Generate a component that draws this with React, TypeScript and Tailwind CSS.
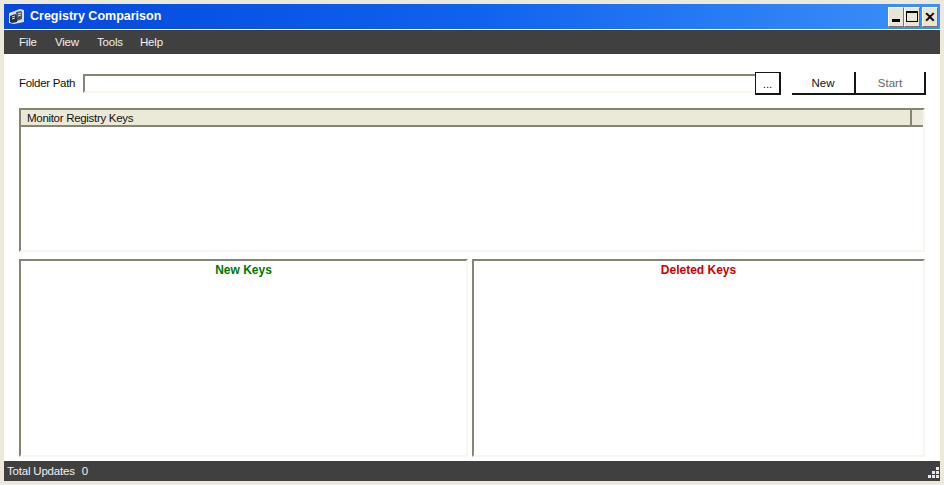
const sunken = 'border-2 border-t-[#858574] border-l-[#858574] border-r-[#f8f7ef] border-b-[#f8f7ef]'
const ui = "font-['Liberation_Sans',sans-serif]"

function AppIcon() {
  return (
    <svg width="17" height="17" viewBox="0 0 17 17">
      <path d="M1 5 L12 1 L16 2 L16 14 L6 16 L1 15 Z" fill="#d5e2f2" />
      <path d="M2 8 L7 6 L9 7 L9 14 L4 15 L2 14 Z" fill="#2c3238" />
      <path d="M8 4 L13 3 L14 4 L14 11 L9 13 Z" fill="#4c565f" />
      <path d="M4 9 L7 8 M4 11 L7 10 M10 6 L13 5 M10 8 L13 7" stroke="#dde3ea" strokeWidth="1" />
    </svg>
  )
}

function CaptionButton({ children }: { children: React.ReactNode }) {
  return (
    <div className="w-[16px] h-[20px] flex items-center justify-center bg-[#e9e6d6] border-r border-b border-r-[#77756a] border-b-[#77756a] border-t border-l border-t-white border-l-white">
      {children}
    </div>
  )
}

function FlatButton({ label, className, dim }: { label: string; className: string; dim?: boolean }) {
  return (
    <button
      className={`h-[23px] pt-[3px] bg-white border-r-2 border-b-2 border-r-[#161616] border-b-[#161616] text-[11.500px] ${
        dim ? 'text-[#666666]' : 'text-[#111111]'
      } ${className}`}
    >
      {label}
    </button>
  )
}

function KeysPanel({ title, color, className }: { title: string; color: string; className: string }) {
  return (
    <div className={`h-[198px] bg-white ${sunken} ${className}`}>
      <div className={`text-center text-[12px] leading-[14px] mt-[2px] font-bold ${color}`}>{title}</div>
    </div>
  )
}

export default function App() {
  return (
    <div className={`w-[944px] h-[485px] overflow-hidden flex flex-col bg-[#ece9d8] pt-[4px] pb-[4px] px-[4px] ${ui}`}>
      {/* title bar */}
      <div className="h-[25px] shrink-0 flex items-center pl-[4px] pr-[2px] bg-gradient-to-r from-[#0647dc] via-[#0f62ee] to-[#3c90f8]">
        <AppIcon />
        <span className="ml-[5px] text-white text-[12.500px] font-bold">Cregistry Comparison</span>
        <div className="ml-auto flex">
          <CaptionButton>
            <div className="w-[8px] h-[3px] bg-black mt-[8px]" />
          </CaptionButton>
          <CaptionButton>
            <div className="w-[12px] h-[11px] border border-black border-t-2" />
          </CaptionButton>
          <div className="w-[2px]" />
          <CaptionButton>
            <span className="text-black text-[14px] leading-none font-bold">✕</span>
          </CaptionButton>
        </div>
      </div>
      <div className="h-[1px] shrink-0 bg-white" />

      {/* menu */}
      <div className="h-[24px] shrink-0 pt-[1px] bg-[#404040] flex items-center pl-[15px] text-[11.500px] tracking-[-0.2px] text-[#f0f0f0]">
        <span className="w-[36px]">File</span>
        <span className="w-[42px]">View</span>
        <span className="w-[43px]">Tools</span>
        <span>Help</span>
      </div>

      {/* body */}
      <div className="flex-1 bg-white flex flex-col pl-[15px] pr-[14px] min-h-0">
        <div className="flex items-center mt-[18px] h-[23px]">
          <span className="w-[64px] text-[11.500px] tracking-[-0.3px] text-[#111111]">Folder Path</span>
          <div className={`w-[673px] h-[19px] bg-white ${sunken} border-r-0`} />
          <FlatButton label="..." className="w-[26px] border-t border-l border-t-[#161616] border-l-[#161616] ml-[-1px]" />
          <FlatButton label="New" className="w-[64px] ml-[11px]" />
          <FlatButton label="Start" className="w-[70px]" dim />
        </div>

        <div className={`mt-[13px] ml-0 h-[144px] w-[906px] bg-white ${sunken}`}>
          <div className="h-[15px] bg-[#ece9d8] border-b-2 border-b-[#858574] box-content flex text-[11.500px] leading-[16px] tracking-[-0.3px] text-[#111111]">
            <div className="w-[891px] pl-[6px] border-r-2 border-r-[#858574]">Monitor Registry Keys</div>
          </div>
        </div>

        <div className="mt-[7px] flex">
          <KeysPanel title="New Keys" color="text-[#007700]" className="w-[449px]" />
          <KeysPanel title="Deleted Keys" color="text-[#cc0000]" className="w-[453px] ml-[4px]" />
        </div>
      </div>

      {/* status bar */}
      <div className="h-[20px] shrink-0 pt-[1px] bg-[#404040] flex items-center pl-[3px] text-[11.500px] tracking-[-0.2px] text-[#f0f0f0]">
        <span>Total Updates</span>
        <span className="ml-[7px]">0</span>
        <svg className="ml-auto mt-[3px]" width="14" height="14" viewBox="0 0 14 14" fill="#e8e8e8">
          <rect x="10" y="1" width="3" height="3" />
          <rect x="6" y="5" width="3" height="3" />
          <rect x="10" y="5" width="3" height="3" />
          <rect x="2" y="9" width="3" height="3" />
          <rect x="6" y="9" width="3" height="3" />
          <rect x="10" y="9" width="3" height="3" />
        </svg>
      </div>
    </div>
  )
}
